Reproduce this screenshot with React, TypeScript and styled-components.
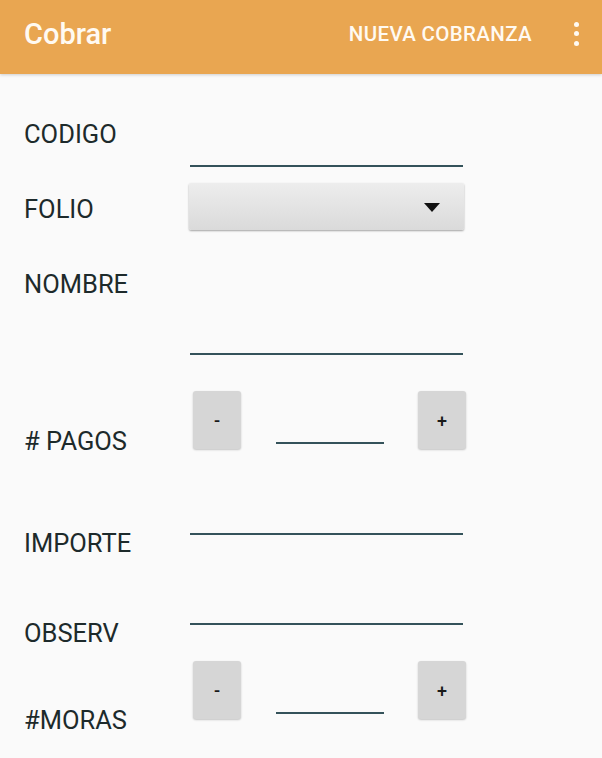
import React from "react";
import styled, { createGlobalStyle } from "styled-components";

const GlobalStyle = createGlobalStyle`
  html, body {
    margin: 0;
    padding: 0;
    background: #fafafa;
    font-family: Roboto, "Noto Sans", "Liberation Sans", sans-serif;
  }
  * { box-sizing: border-box; }
`;

const Screen = styled.div`
  width: 602px;
  height: 758px;
  background: #fafafa;
  overflow: hidden;
`;

const AppBar = styled.header`
  height: 74px;
  background: #e9a651;
  display: flex;
  align-items: center;
  padding: 0 23px 6px 24px;
  box-shadow: 0 1px 3px rgba(0, 0, 0, 0.18);
  position: relative;
  z-index: 1;
`;

const Title = styled.h1`
  flex: 1;
  margin: 0;
  font-size: 29px;
  line-height: 1;
  font-weight: 500;
  color: #fffaf2;
`;

const Action = styled.span`
  font-size: 20.5px;
  line-height: 1;
  font-weight: 500;
  letter-spacing: 0.35px;
  color: #fffaf2;
`;

const Overflow = styled.div`
  display: flex;
  flex-direction: column;
  gap: 4.5px;
  margin-left: 42px;
  margin-bottom: 1px;
`;

const Dot = styled.span`
  width: 5px;
  height: 5px;
  border-radius: 50%;
  background: #fffaf2;
`;

const Form = styled.main`
  padding-left: 24px;
`;

const Row = styled.div<{ $h: number }>`
  display: grid;
  grid-template-columns: 166px 1fr;
  align-items: start;
  height: ${(p) => p.$h}px;
`;

const Label = styled.div<{ $top: number }>`
  margin-top: ${(p) => p.$top}px;
  font-size: 25.5px;
  line-height: 30px;
  font-weight: 400;
  color: #1d2a2b;
  white-space: nowrap;
`;

const TextLine = styled.div<{ $top: number; $w?: number; $h?: number }>`
  margin-top: ${(p) => p.$top}px;
  width: ${(p) => p.$w ?? 273}px;
  height: ${(p) => p.$h ?? 48}px;
  border-bottom: 2px solid #34525a;
`;

const Spinner = styled.div<{ $top: number }>`
  margin-top: ${(p) => p.$top}px;
  margin-left: -1px;
  width: 275px;
  height: 47px;
  border-radius: 2px;
  background: linear-gradient(#ededed, #dadada);
  box-shadow: 0 1px 2px rgba(0, 0, 0, 0.35);
  display: flex;
  align-items: center;
  justify-content: flex-end;
  padding: 2px 24px 0 0;
`;

const Arrow = styled.span`
  width: 0;
  height: 0;
  border-left: 8px solid transparent;
  border-right: 8px solid transparent;
  border-top: 9px solid #111;
`;

const Stepper = styled.div<{ $top: number }>`
  margin-top: ${(p) => p.$top}px;
  padding-left: 3px;
  display: flex;
  align-items: flex-start;
`;

const StepButton = styled.button<{ $gap?: number }>`
  width: 48px;
  height: 58px;
  margin-left: ${(p) => p.$gap ?? 0}px;
  border: none;
  border-radius: 3px;
  background: #d6d6d6;
  box-shadow: 0 1px 2px rgba(0, 0, 0, 0.22);
  font-family: Roboto, "Liberation Sans", sans-serif;
  font-size: 18px;
  font-weight: 500;
  color: #1a1a1a;
  padding: 0;
  display: flex;
  align-items: center;
  justify-content: center;
`;

const StepValue = styled.div`
  width: 108px;
  height: 53px;
  margin-left: 35px;
  border-bottom: 2px solid #34525a;
`;

export default function App() {
  return (
    <>
      <GlobalStyle />
      <Screen>
        <AppBar>
          <Title>Cobrar</Title>
          <Action>NUEVA COBRANZA</Action>
          <Overflow>
            <Dot />
            <Dot />
            <Dot />
          </Overflow>
        </AppBar>
        <Form>
          <Row $h={101}>
            <Label $top={45}>CODIGO</Label>
            <TextLine $top={45} />
          </Row>
          <Row $h={75}>
            <Label $top={19}>FOLIO</Label>
            <Spinner $top={8}>
              <Arrow />
            </Spinner>
          </Row>
          <Row $h={120}>
            <Label $top={19}>NOMBRE</Label>
            <TextLine $top={57} />
          </Row>
          <Row $h={100}>
            <Label $top={56}># PAGOS</Label>
            <Stepper $top={21}>
              <StepButton>-</StepButton>
              <StepValue />
              <StepButton $gap={34}>+</StepButton>
            </Stepper>
          </Row>
          <Row $h={100}>
            <Label $top={58}>IMPORTE</Label>
            <TextLine $top={17} />
          </Row>
          <Row $h={80}>
            <Label $top={48}>OBSERV</Label>
            <TextLine $top={7} />
          </Row>
          <Row $h={108}>
            <Label $top={55}>#MORAS</Label>
            <Stepper $top={11}>
              <StepButton>-</StepButton>
              <StepValue />
              <StepButton $gap={34}>+</StepButton>
            </Stepper>
          </Row>
        </Form>
      </Screen>
    </>
  );
}
